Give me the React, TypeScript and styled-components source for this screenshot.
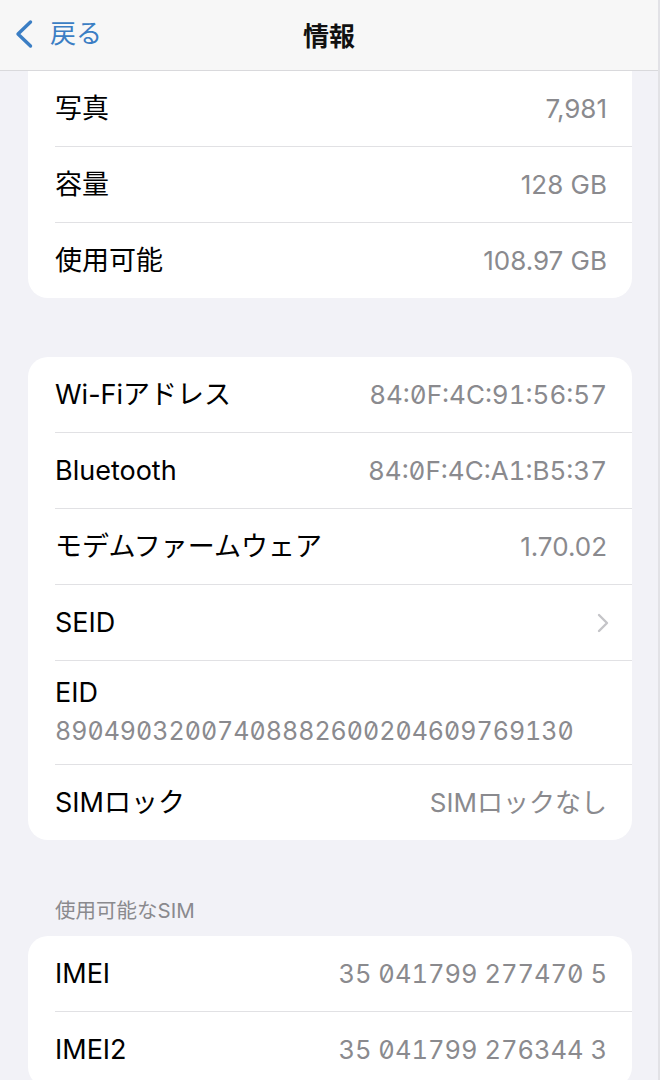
import styled, { createGlobalStyle } from 'styled-components';

const GlobalStyle = createGlobalStyle`
    html, body {
        margin: 0;
        padding: 0;
        background: #f2f2f7;
    }
    body {
        font-family: 'Inter', 'Noto Sans CJK JP', sans-serif;
        -webkit-font-smoothing: antialiased;
    }
`;

interface InfoRow {
    label: string;
    value?: string;
    mono?: boolean;
    size?: number;
    chevron?: boolean;
    stacked?: boolean;
}

const storage: InfoRow[] = [
    { label: '写真', value: '7,981' },
    { label: '容量', value: '128 GB' },
    { label: '使用可能', value: '108.97 GB' },
];

const network: InfoRow[] = [
    { label: 'Wi-Fiアドレス', value: '84:0F:4C:91:56:57', mono: true },
    { label: 'Bluetooth', value: '84:0F:4C:A1:B5:37', mono: true },
    { label: 'モデムファームウェア', value: '1.70.02' },
    { label: 'SEID', chevron: true },
    { label: 'EID', value: '89049032007408882600204609769130', mono: true, size: 25, stacked: true },
    { label: 'SIMロック', value: 'SIMロックなし' },
];

const sim: InfoRow[] = [
    { label: 'IMEI', value: '35 041799 277470 5', mono: true, size: 25.5 },
    { label: 'IMEI2', value: '35 041799 276344 3', mono: true, size: 25.5 },
];

const Row = ({ row }: { row: InfoRow }) => {
    if (row.stacked) {
        return (
            <Style.StackedRow>
                <Style.Label>{row.label}</Style.Label>
                <Style.Value $mono={row.mono} $size={row.size} $left>
                    {row.value}
                </Style.Value>
            </Style.StackedRow>
        );
    }
    return (
        <Style.Row>
            <Style.Label>{row.label}</Style.Label>
            {row.value && (
                <Style.Value $mono={row.mono} $size={row.size}>
                    {row.value}
                </Style.Value>
            )}
            {row.chevron && (
                <Style.Disclosure>
                    <svg width="12" height="20" viewBox="0 0 12 20" fill="none">
                        <path d="M2 2 L10 10 L2 18" stroke="#c4c4c8" strokeWidth="2.4" strokeLinecap="round" strokeLinejoin="round" />
                    </svg>
                </Style.Disclosure>
            )}
        </Style.Row>
    );
};

const App = () => {
    return (
        <Style.Screen>
            <GlobalStyle />
            <Style.NavBar>
                <Style.BackButton>
                    <svg width="20" height="30" viewBox="0 0 20 30" fill="none">
                        <path d="M16.5 3 L4 15 L16.5 27" stroke="#3b7ec4" strokeWidth="3.4" strokeLinecap="round" strokeLinejoin="round" />
                    </svg>
                    <span>戻る</span>
                </Style.BackButton>
                <Style.Title>情報</Style.Title>
            </Style.NavBar>
            <Style.Content>
                <Style.Card $flatTop>
                    {storage.map((r) => (
                        <Row key={r.label} row={r} />
                    ))}
                </Style.Card>
                <Style.Card>
                    {network.map((r) => (
                        <Row key={r.label} row={r} />
                    ))}
                </Style.Card>
                <Style.SectionHeader>使用可能なSIM</Style.SectionHeader>
                <Style.Card $noGap>
                    {sim.map((r) => (
                        <Row key={r.label} row={r} />
                    ))}
                </Style.Card>
            </Style.Content>
        </Style.Screen>
    );
};

const Style = {
    Screen: styled.div`
        width: 660px;
        height: 1080px;
        overflow: hidden;
        background: #f2f2f7;
        display: flex;
        flex-direction: column;
        box-sizing: border-box;
        border-right: 2px solid #e2e2e6;
    `,
    NavBar: styled.div`
        height: 70px;
        flex-shrink: 0;
        background: #f7f7f7;
        border-bottom: 1px solid #d9d9dc;
        display: flex;
        align-items: center;
        justify-content: center;
        position: relative;
    `,
    BackButton: styled.div`
        position: absolute;
        left: 14px;
        top: 19px;
        display: flex;
        align-items: center;
        gap: 16px;
        color: #3b7ec4;
        font-size: 26px;
        line-height: 30px;
    `,
    Title: styled.div`
        font-size: 26px;
        font-weight: 700;
        color: #111;
        margin-top: -2px;
    `,
    Content: styled.div`
        padding: 0 26px 0 28px;
        display: flex;
        flex-direction: column;
    `,
    Card: styled.div<{ $flatTop?: boolean; $noGap?: boolean }>`
        background: #fff;
        border-radius: ${(p) => (p.$flatTop ? '0 0 20px 20px' : '20px')};
        margin-top: ${(p) => (p.$flatTop || p.$noGap ? '0' : '59px')};
        overflow: hidden;
    `,
    Row: styled.div`
        height: 75px;
        margin-left: 27px;
        padding-right: 25px;
        display: flex;
        align-items: center;
        justify-content: space-between;
        & + div {
            border-top: 1px solid #e1e1e4;
        }
    `,
    StackedRow: styled.div`
        height: 104px;
        margin-left: 27px;
        padding-right: 25px;
        box-sizing: border-box;
        padding-top: 17px;
        display: flex;
        flex-direction: column;
        gap: 8px;
        & + div {
            border-top: 1px solid #e1e1e4;
        }
    `,
    Label: styled.div`
        font-size: 27px;
        line-height: 30px;
        color: #000;
    `,
    Value: styled.div<{ $mono?: boolean; $size?: number; $left?: boolean }>`
        font-size: ${(p) => p.$size ?? 26}px;
        font-variant-numeric: ${(p) => (p.$mono ? 'tabular-nums slashed-zero' : 'normal')};
        line-height: 30px;
        color: #8a8a8e;
        text-align: ${(p) => (p.$left ? 'left' : 'right')};
    `,
    Disclosure: styled.div`
        display: flex;
        align-items: center;
        margin-right: -2px;
    `,
    SectionHeader: styled.div`
        margin: 60px 0 14px 27px;
        font-size: 20.5px;
        line-height: 22px;
        color: #8a8a8e;
    `,
};

export default App;
